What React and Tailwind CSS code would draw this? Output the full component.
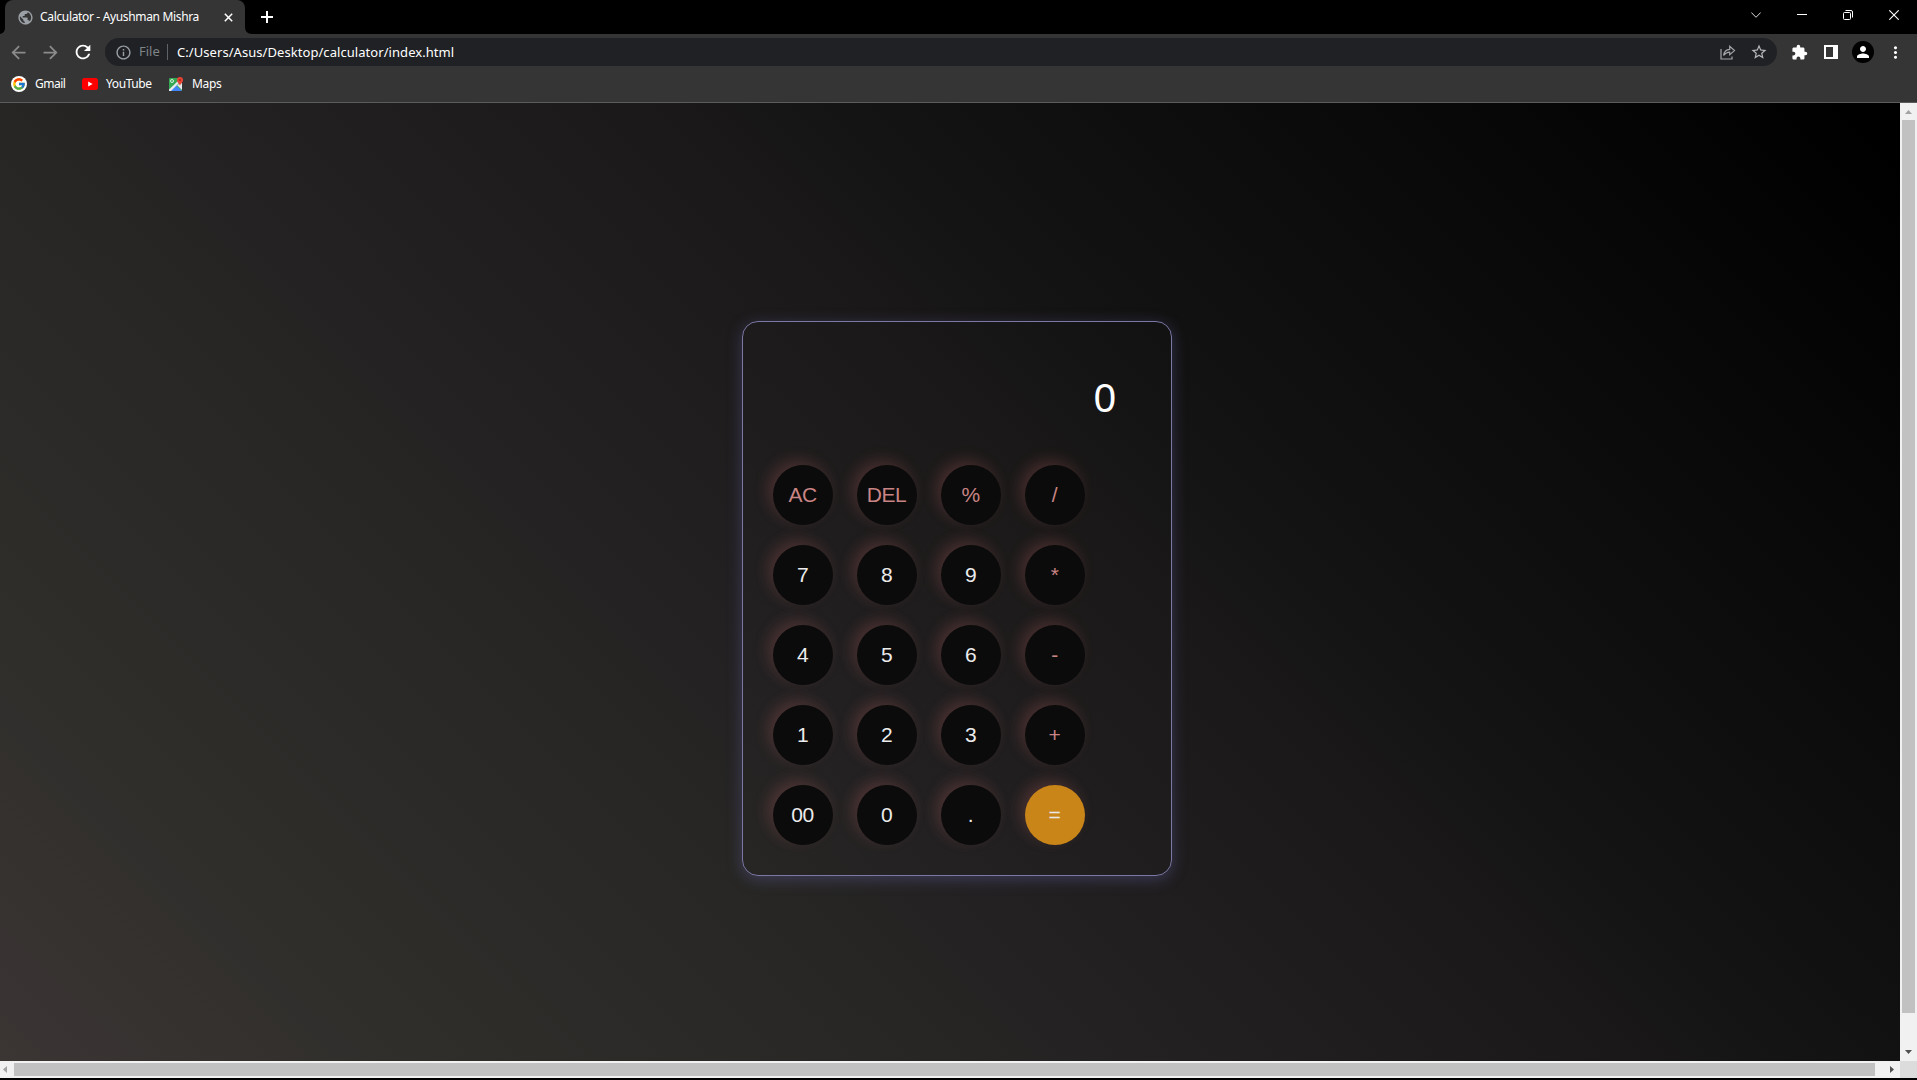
import React from "react";
import { MdPublic, MdArrowBack, MdArrowForward, MdRefresh, MdInfoOutline, MdStarBorder, MdExtension, MdPerson, MdMoreVert } from "react-icons/md";
import { FcGoogle } from "react-icons/fc";

const KEYS = ["AC", "DEL", "%", "/", "7", "8", "9", "*", "4", "5", "6", "-", "1", "2", "3", "+", "00", "0", ".", "="];
const OPERATORS = ["AC", "DEL", "%", "/", "*", "-", "+"];

function keyColors(k) {
  if (k === "=") return "bg-[#ca8519] text-[#e8e8e8]";
  if (OPERATORS.includes(k)) return "bg-[#0b0b0b] text-[#c98484]";
  return "bg-[#0b0b0b] text-[#ececec]";
}

function TabStrip() {
  return (
    <div className="flex h-[34px] items-stretch bg-black text-white">
      <div className="relative ml-[5px] flex w-[240px] items-center rounded-t-lg bg-[#353535] pl-3">
        <svg className="absolute -left-[5px] bottom-0" width="5" height="6" viewBox="0 0 5 6"><path d="M5 0v6H0Q5 5 5 0Z" fill="#353535" /></svg>
        <svg className="absolute -right-[7px] bottom-0" width="7" height="7" viewBox="0 0 7 7"><path d="M0 0v7h7Q0 7 0 0Z" fill="#353535" /></svg>
        <MdPublic className="size-[17px] text-[#9aa0a6]" />
        <span className="ml-[6px] w-[181px] text-xs tracking-[-0.34px] whitespace-nowrap">Calculator - Ayushman Mishra</span>
        <svg className="ml-[3px]" width="9" height="9" viewBox="0 0 9 9" stroke="#fff" strokeWidth="1.5"><path d="M.8.8l7.4 7.4M8.2.8L.8 8.2" /></svg>
      </div>
      <svg className="mt-[11px] ml-4" width="12" height="12" viewBox="0 0 12 12" stroke="#fff" strokeWidth="2"><path d="M6 0v12M0 6h12" /></svg>
      <div className="mt-[9px] mr-[18px] ml-auto flex h-[11px] items-center">
        <svg width="10" height="6" viewBox="0 0 10 6" fill="none" stroke="#ddd"><path d="M.3.5L5 5.3 9.7.5" /></svg>
        <div className="ml-[36px] h-px w-[10px] bg-white" />
        <svg className="ml-[36px]" width="10" height="10" viewBox="0 0 10 10" fill="none" stroke="#fff"><rect x=".5" y="2.5" width="7" height="7" rx="1" /><path d="M2.5.5H8A1.5 1.5 0 0 1 9.5 2v5.5" /></svg>
        <svg className="ml-[36px]" width="10" height="10" viewBox="0 0 10 10" stroke="#fff" strokeWidth="1.1"><path d="M.3.3l9.4 9.4M9.7.3L.3 9.7" /></svg>
      </div>
    </div>
  );
}

function Toolbar() {
  return (
    <div className="flex h-[36px] items-center text-[#8b8b8b]">
      <MdArrowBack className="ml-2 size-[21px]" />
      <MdArrowForward className="ml-[11px] size-[21px]" />
      <MdRefresh className="ml-[11px] size-[22px] text-white" />
      <div className="ml-[11px] flex h-[28px] w-[1672px] items-center rounded-full bg-[#202124] pl-[10px]">
        <MdInfoOutline className="size-[17px] text-[#9aa0a6]" />
        <span className="ml-[7px] w-[22px] text-[13px] text-[#7f8489]">File</span>
        <div className="mr-[9px] ml-[6px] h-4 w-px bg-[#5f6368]" />
        <span className="pt-px text-[13px] tracking-[0.06px] whitespace-nowrap text-white">C:/Users/Asus/Desktop/calculator/index.html</span>
        <svg className="ml-auto" width="16" height="15" viewBox="0 0 16 15" fill="none" stroke="#a3a6aa" strokeWidth="1.2"><path d="M1 4v10h11v-2.500" /><path d="M3.600 10.500C4.200 6.500 6.500 4.600 9.700 4.400V1.300l4.800 4.300-4.800 4.200V7.200C7 7.200 5.300 8.200 3.600 10.500Z" /></svg>
        <MdStarBorder className="mr-[9px] ml-[14px] size-[18px] text-[#b5b8bc]" />
      </div>
      <MdExtension className="ml-[14px] size-[17px] text-white" />
      <svg className="ml-[16px]" width="14" height="14" viewBox="0 0 14 14"><path fill="#fff" fillRule="evenodd" d="M0 0h14v14H0ZM2 2v10h7V2Z" /></svg>
      <div className="ml-[14px] flex size-[22px] items-center justify-center rounded-full bg-black text-white">
        <MdPerson className="size-[18px]" />
      </div>
      <MdMoreVert className="ml-[12px] size-[19px] text-white" />
    </div>
  );
}

function Bookmarks() {
  return (
    <div className="flex h-[32px] items-center pb-[4px] pl-[11px] text-xs text-white">
      <span className="flex size-4 items-center justify-center rounded-full bg-white"><FcGoogle className="size-[14px]" /></span>
      <span className="ml-2 w-[31px] tracking-[-0.5px]">Gmail</span>
      <svg className="ml-4" width="16" height="12" viewBox="0 0 16 12"><rect width="16" height="12" rx="2.500" fill="#f00" /><path d="M6.200 3.500v5L10.600 6Z" fill="#fff" /></svg>
      <span className="ml-2 w-[47px] tracking-[-0.4px]">YouTube</span>
      <svg className="ml-4" width="15" height="15" viewBox="0 0 15 15">
        <rect y="1" width="13" height="13" rx="1" fill="#34a853" />
        <path d="M0 14L6.500 7.500 13 14Z" fill="#4285f4" />
        <path d="M0 12.500L10 3l1.500 1.500L2 14H0Z" fill="#e8eaed" />
        <path d="M8 8l5 5V6Z" fill="#e8eaed" />
        <circle cx="3" cy="4" r="1.500" fill="none" stroke="#fff" strokeWidth=".8" />
        <path d="M11 9C10.700 6.500 8 5.700 8 3a3 3 0 0 1 6 0c0 2.700-2.700 3.500-3 6Z" fill="#ea4335" />
        <circle cx="11" cy="3" r="1" fill="#a52714" />
      </svg>
      <span className="ml-2 tracking-[-0.35px]">Maps</span>
    </div>
  );
}

function Calculator() {
  return (
    <div className="mt-[218px] ml-[742px] h-[555px] w-[430px] rounded-2xl border border-[#7b78a6] px-[30px] pt-[30px] font-['Liberation_Sans',Arial,sans-serif] shadow-[0px_3px_15px_rgba(113,108,190,0.35)]">
      <div className="flex h-[113px] items-start justify-end pt-[23px] pr-[25px] text-[40px] leading-[46px] text-white">0</div>
      <div className="grid grid-cols-[repeat(4,60px)] gap-x-6 gap-y-5">
        {KEYS.map((k) => (
          <button key={k} className={"size-[60px] rounded-full p-0 pr-px text-[21px] tracking-[-0.5px] shadow-[-5px_-5px_15px_rgba(255,130,130,0.19)] " + keyColors(k)}>{k}</button>
        ))}
      </div>
    </div>
  );
}

export default function App() {
  return (
    <div className="flex h-[1080px] w-[1917px] flex-col overflow-hidden bg-black font-['Noto_Sans',sans-serif]">
      <TabStrip />
      <div className="h-[69px] border-b border-[#5c5c5c] bg-[#353535]">
        <Toolbar />
        <Bookmarks />
      </div>
      <div className="flex h-[958px]">
        <div className="w-[1900px] bg-[linear-gradient(45deg,#3b3534,#2f2e2b_15%,#272624_33%,#232122_40%,#1a1818_57%,#121212_66%,#000_98%)]">
          <Calculator />
        </div>
        <div className="flex w-[17px] flex-col items-center bg-[#f1f1f1]">
          <svg className="mt-[7px]" width="7" height="4" viewBox="0 0 7 4"><path d="M0 4L3.500 0 7 4Z" fill="#a3a3a3" /></svg>
          <div className="mt-[6px] h-[893px] w-[13px] bg-[#c1c1c1]" />
          <svg className="mt-auto mb-[7px]" width="7" height="4" viewBox="0 0 7 4"><path d="M0 0L3.500 4 7 0Z" fill="#505050" /></svg>
        </div>
      </div>
      <div className="flex h-[17px] items-center bg-[#f1f1f1]">
        <svg className="ml-[3px]" width="4" height="7" viewBox="0 0 4 7"><path d="M4 0L0 3.500 4 7Z" fill="#a3a3a3" /></svg>
        <div className="ml-[7px] h-[13px] w-[1861px] bg-[#c1c1c1]" />
        <svg className="ml-[15px]" width="4" height="7" viewBox="0 0 4 7"><path d="M0 0L4 3.500 0 7Z" fill="#505050" /></svg>
        <div className="ml-auto h-[17px] w-[17px] bg-[#dcdcdc]" />
      </div>
    </div>
  );
}
